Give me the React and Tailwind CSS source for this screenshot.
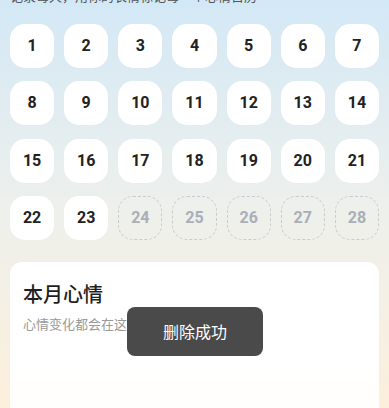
import React from "react";

const days = Array.from({ length: 28 }, (_, i) => i + 1);

export default function App() {
  return (
    <div
      className="relative w-[389px] h-[408px] overflow-hidden bg-gradient-to-b from-[#d3e8f6] via-[#edf0ec] to-[#fcefdc]"
      style={{ fontFamily: '"Noto Sans", "Noto Sans CJK SC", sans-serif' }}
    >
      <p className="-mt-[12px] px-[10px] text-[13px] leading-[16px] text-[#555] whitespace-nowrap">
        记录每天，用你的表情标记每一个心情日历
      </p>
      <div className="mt-[20px] px-[10px] grid grid-cols-7 gap-x-[10px] gap-y-[13.3px]">
        {days.map((d) => {
          const done = d <= 23;
          return (
            <div
              key={d}
              className={
                done
                  ? "h-[44px] rounded-[15px] bg-white flex items-center justify-center text-[16px] font-bold text-[#222]"
                  : "h-[44px] rounded-[15px] border border-dashed border-[#c9cccf] flex items-center justify-center text-[16px] font-bold text-[#a9aeb8]"
              }
              style={{ fontFamily: '"Roboto", "Liberation Sans", sans-serif' }}
            >
              {d}
            </div>
          );
        })}
      </div>
      <div className="mx-[10px] mt-[22px] h-[200px] rounded-[12px] bg-gradient-to-b from-white via-white to-[#fffcf6] px-[13px] pt-[19px]">
        <h2 className="text-[20px] leading-[28px] font-medium text-[#1f1f1f]">本月心情</h2>
        <p className="mt-[6px] text-[13px] leading-[18px] text-[#999]">心情变化都会在这里展示哦</p>
      </div>
      <div className="absolute left-[127px] top-[307px] w-[136px] h-[49px] rounded-[8px] bg-[#4a4a4a] flex items-center justify-center text-white text-[16px]">
        删除成功
      </div>
    </div>
  );
}
